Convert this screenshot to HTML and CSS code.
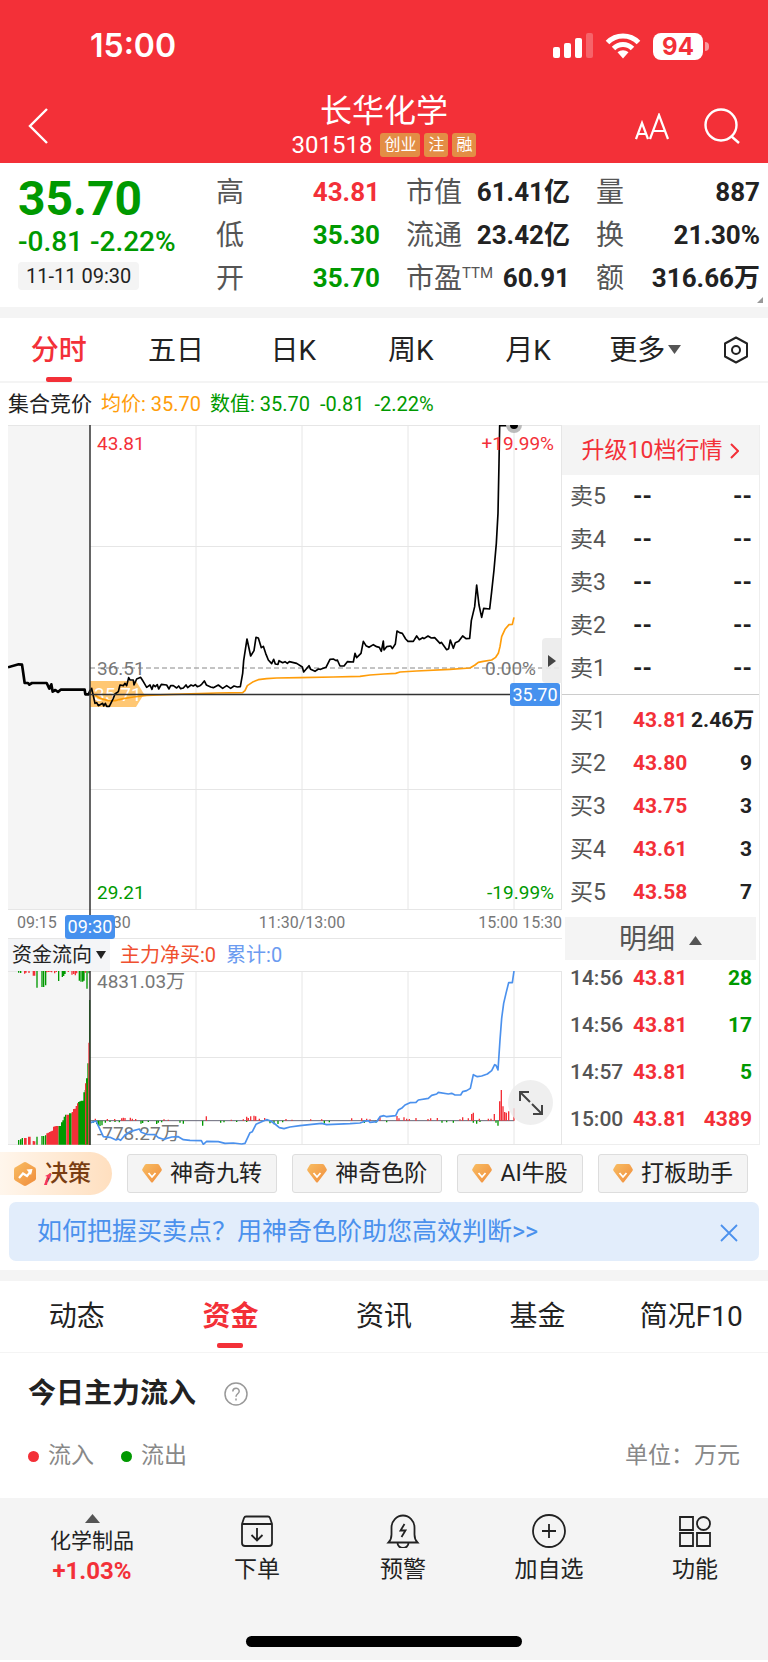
FILE: index.html
```html
<!DOCTYPE html>
<html lang="zh-CN">
<head>
  <meta charset="UTF-8" />
  <meta name="viewport" content="width=device-width, initial-scale=1.0"/>
  <title>长华化学 301518</title>
  <link rel="stylesheet" href="styles.css">
</head>
<body>

  <header class="header">
    <div class="status-bar">
      <span class="clock">15:00</span>
      <div class="status-icons">
        <svg width="40" height="26" viewBox="0 0 40 26" fill="#fff">
          <rect x="0" y="14" width="7" height="11" rx="2"/>
          <rect x="11" y="10" width="7" height="15" rx="2"/>
          <rect x="22" y="5" width="7" height="20" rx="2"/>
          <rect x="33" y="0" width="7" height="25" rx="2" opacity=".25"/>
        </svg>
        <svg width="36" height="26" viewBox="0 0 36 26" fill="none" stroke="#fff" stroke-width="5">
          <path d="M2.500 9.500C11 .8 25 .8 33.500 9.500"/>
          <path d="M8.500 15.500C14 10.200 22 10.200 27.500 15.500"/>
          <path d="M18 25.500l-5.500-6.200c3.200-2.800 7.800-2.800 11 0z" fill="#fff" stroke="none"/>
        </svg>
        <span class="battery">94</span>
      </div>
    </div>
    <div class="title-bar">
      <button class="icon-btn back" aria-label="返回">
        <svg width="20" height="36" viewBox="0 0 20 36" fill="none" stroke="#fff" stroke-width="2.400"><path d="M19 1L2 18l17 17"/></svg>
      </button>
      <div class="title">
        <h1>长华化学</h1>
        <div class="code">301518 <span class="tag">创业</span><span class="tag">注</span><span class="tag">融</span></div>
      </div>
      <div class="title-actions">
        <button class="icon-btn" aria-label="字体大小">
          <svg width="35" height="27" viewBox="0 0 35 27" fill="none" stroke="#fff" stroke-width="2.200"><path d="M1 26L7 10l6 16M3 21h8M15 26l9-24 9 24M18 18h12"/></svg>
        </button>
        <button class="icon-btn" aria-label="搜索">
          <svg width="36" height="36" viewBox="0 0 36 36" fill="none" stroke="#fff" stroke-width="2.400"><circle cx="17" cy="17" r="15.500"/><path d="M27 28l8 7"/></svg>
        </button>
      </div>
    </div>
  </header>

  <section class="quote">
    <div class="price">
      <strong class="last">35.70</strong>
      <span class="change">-0.81 -2.22%</span>
      <time class="stamp">11-11 09:30</time>
    </div>
    <dl class="stats">
      <div><dt>高</dt><dd class="up">43.81</dd></div>
      <div><dt>低</dt><dd class="down">35.30</dd></div>
      <div><dt>开</dt><dd class="down">35.70</dd></div>
    </dl>
    <dl class="stats">
      <div><dt>市值</dt><dd>61.41亿</dd></div>
      <div><dt>流通</dt><dd>23.42亿</dd></div>
      <div><dt>市盈<sup>TTM</sup></dt><dd>60.91</dd></div>
    </dl>
    <dl class="stats">
      <div><dt>量</dt><dd>887</dd></div>
      <div><dt>换</dt><dd>21.30%</dd></div>
      <div><dt>额</dt><dd>316.66万</dd></div>
    </dl>
    <svg class="corner" width="6" height="6" viewBox="0 0 6 6" fill="#999"><path d="M6 0v6H0z"/></svg>
  </section>

  <nav class="period-tabs">
    <a href="#" class="active">分时</a>
    <a href="#">五日</a>
    <a href="#">日K</a>
    <a href="#">周K</a>
    <a href="#">月K</a>
    <a href="#">更多<svg class="caret" width="13" height="9" viewBox="0 0 13 9" fill="#555"><path d="M0 0h13L6.500 9z"/></svg></a>
    <button class="icon-btn" aria-label="设置">
      <svg width="26" height="28" viewBox="0 0 26 28" fill="none" stroke="#222" stroke-width="2" stroke-linejoin="round"><path d="M13 1.500l11 6v13l-11 6-11-6v-13z"/><circle cx="13" cy="14" r="4"/></svg>
    </button>
  </nav>

  <div class="legend">
    <span class="phase">集合竞价</span>
    <span class="avg">均价: 35.70</span>
    <span class="down">数值: 35.70 &nbsp;-0.81 &nbsp;-2.22%</span>
  </div>

  <main class="market">
    <div class="charts">
      <div class="chart-box">
        <!-- 分时 price chart -->
        <svg class="chart" viewBox="8 425 554 514">
          <rect x="8" y="425" width="82" height="484" fill="#f5f5f5"/>
          <path class="grid" d="M8 425.500H562M90 546.500H562M90 789.500H562M8 909.500H562M8 938.500H562M196 425V909M302 425V909M408 425V909M514 425V909M561.500 425V909"/>
          <path class="prev-close" d="M90 668H562"/>
          <path d="M90 681h46l8 13-8 13H90z" fill="#ffc773"/>
          <text x="94" y="701" class="label faded">35.71</text>
          <g transform="translate(0 420) scale(.33333)">
            <path class="line" stroke="#ff9d0a" d="M285 825L300 835 325 842 345 842 370 836 400 831 440 826 520 823 600 821 650 819 728 818 735 812 742 797 760 785 775 779 800 776 830 774 900 773 1000 771 1080 769 1110 765 1152 762 1187 760 1200 756 1250 753 1350 748 1410 744 1425 735 1435 727 1450 724 1475 720 1487 712 1495 700 1500 680 1505 650 1515 628 1527 614 1537 613 1542 592"/>
            <path class="line auction" d="M24 742L56 733 66 734 68 747 74 789 84 789 88 794 96 789 140 789 148 806 154 793 158 815 166 810 174 816 182 809 254 809 256 823 266 823 272 810"/>
            <path class="line" stroke="#000" d="M272 810L275 805 285 850 290 848 295 857 308 850 311 858 316 850 320 859 328 859 335 845 340 835 345 822 355 815 360 795 370 797 375 790 380 797 386 773 390 780 400 780 402 795 410 777 422 772 427 780 430 785 440 802 450 795 456 808 460 795 466 800 472 794 476 807 484 793 500 795 507 807 512 797 520 797 530 804 536 798 542 806 550 804 558 795 563 803 573 795 580 798 586 794 592 800 600 797 605 793 613 783 619 795 632 801 640 803 655 795 668 805 680 797 692 805 702 798 712 801 721 800 728 760 731 722 741 657 752 708 762 692 768 652 775 654 784 683 790 679 797 700 805 720 815 731 821 718 826 732 834 733 837 722 848 728 855 725 862 730 868 725 890 730 907 741 911 756 927 737 932 748 945 754 955 747 962 748 978 742 990 718 1000 717 1008 722 1012 720 1020 738 1032 738 1042 725 1060 726 1065 700 1070 713 1083 700 1090 664 1098 677 1107 682 1120 674 1130 680 1138 682 1144 694 1150 663 1152 690 1160 680 1172 678 1177 686 1186 672 1191 633 1199 638 1207 640 1217 657 1224 664 1240 664 1250 648 1258 659 1268 653 1272 656 1284 648 1294 654 1304 653 1320 670 1324 667 1340 689 1346 686 1351 660 1360 685 1366 668 1376 664 1388 648 1398 656 1409 655 1414 602 1424 560 1430 495 1437 555 1445 592 1451 565 1469 567 1475 515 1482 450 1489 370 1494 280 1497 130 1499 17 1542 17"/>
          </g>
          <path d="M506 425a8 8 0 0 0 16 0z" fill="#bbb"/>
          <path d="M510 425a4 4 0 0 0 8 0z"/>
          <text x="97" y="450" class="label up">43.81</text>
          <text x="97" y="675" class="label muted">36.51</text>
          <text x="97" y="899" class="label down">29.21</text>
          <text x="554" y="450" class="label up end">+19.99%</text>
          <text x="536" y="675" class="label muted end">0.00%</text>
          <text x="554" y="899" class="label down end">-19.99%</text>
          <text x="17" y="928" class="axis">09:15</text>
          <text x="91" y="928" class="axis">09:30</text>
          <text x="302" y="928" class="axis mid">11:30/13:00</text>
          <text x="518" y="928" class="axis end">15:00</text>
          <text x="562" y="928" class="axis end">15:30</text>
          <path d="M90 425V939M90 694.500H514" stroke="#333" stroke-width="1.500"/>
          <rect x="65" y="915" width="50" height="24" rx="3" fill="#4691ee"/>
          <text x="90" y="933" class="label badge">09:30</text>
          <rect x="510" y="683" width="50" height="23" rx="3" fill="#4691ee"/>
          <text x="535" y="701" class="label badge">35.70</text>
        </svg>
        <button class="expand-side" aria-label="展开"><svg width="8" height="12" viewBox="0 0 8 12" fill="#444"><path d="M0 0l8 6-8 6z"/></svg></button>
      </div>

      <div class="flow-legend">
        <button class="flow-select">资金流向<svg width="10" height="8" viewBox="0 0 10 8" fill="#222"><path d="M0 0h10L5 8z"/></svg></button>
        <span class="net">主力净买:0</span>
        <span class="total">累计:0</span>
      </div>

      <div class="chart-box">
        <!-- 资金流向 chart -->
        <svg class="chart" viewBox="8 971 554 174">
          <rect x="8" y="971" width="82" height="174" fill="#f5f5f5"/>
          <path class="grid" d="M8 971.500H562M90 1057.500H562M8 1144.500H562M196 971V1144M302 971V1144M408 971V1144M514 971V1144M561.500 971V1144"/>
          <text x="97" y="988" class="label muted">4831.03万</text>
          <text x="97" y="1140" class="label muted">-778.27万</text>
          <g transform="translate(0 940) scale(.33333)">
            <path d="M272 542H1542" stroke="#667" stroke-width="3"/>
            <path class="bar sell" d="M56 93V98M62 93V99M111 93V143M126 93V141M131 93V141M137 93V136M176 93V123M187 93V111M191 93V108M195 93V102M238 93V122M243 93V125M248 93V125M252 93V122M261 93V146M267 93V100"/>
            <path class="bar buy" d="M74 93V101M78 93V98M87 93V99M100 93V107M104 93V107M140 93V97M145 93V96M150 93V96M155 93V97M164 93V100M169 93V96M205 93V96M216 93V104M221 93V102M226 93V106M230 93V100M256 93V98"/>
            <path class="bar sell" d="M56 614V600M62 614V598M67 614V594M111 614V590M126 614V588M131 614V588M137 614V586M177 614V558M181 614V558M185 614V547M189 614V541M193 614V530M197 614V524M209 614V520M213 614V520M236 614V486M240 614V484M244 614V482M248 614V482M252 614V457M256 614V450M260 614V415M264 614V370M269 614V180"/>
            <path class="bar buy" d="M74 614V594M78 614V594M86 614V590M90 614V590M100 614V603M104 614V604M141 614V580M145 614V578M149 614V576M153 614V574M157 614V572M161 614V560M165 614V559M169 614V558M173 614V558M201 614V524M205 614V524M217 614V516M221 614V507M225 614V506M229 614V498M233 614V490M257 614V430M267 614V308"/>
            <path class="bar sell" d="M280 542V548M290 542V552M295 542V556M300 542V558M306 542V556M316 542V548M330 542V546M345 542V546M358 542V547M423 542V551M428 542V549M445 542V546M470 542V552M475 542V548M485 542V547M540 542V548M550 542V551M608 542V557M662 542V548M672 542V547M710 542V546M740 542V546M810 542V550M822 542V553M834 542V552M848 542V547M973 542V551M988 542V547M1093 542V549M1128 542V548M1160 542V547M1326 542V548M1340 542V547M1360 542V548M1420 542V548M1430 542V551M1440 542V546M1488 542V548M1494 542V557"/>
            <path class="bar buy" d="M286 542V536M322 542V537M344 542V537M365 542V535M370 542V533M375 542V534M391 542V533M397 542V536M407 542V537M492 542V538M505 542V539M619 542V529M694 542V539M730 542V538M740 542V530M745 542V534M752 542V529M762 542V527M767 542V529M778 542V536M794 542V534M858 542V537M876 542V539M932 542V538M965 542V538M1055 542V535M1085 542V535M1100 542V536M1110 542V538M1140 542V532M1191 542V528M1197 542V535M1212 542V532M1220 542V536M1228 542V537M1248 542V534M1284 542V537M1292 542V535M1312 542V534M1380 542V538M1388 542V532M1405 542V535M1415 542V522M1420 542V518M1438 542V536M1465 542V536M1473 542V536M1483 542V522M1499 542V484M1504 542V450M1509 542V499M1514 542V516M1519 542V518M1526 542V514M1542 542V505"/>
            <path class="line" stroke="#4b91ed" d="M272 548L288 543 296 560 310 590 330 592 348 600 355 597 362 601 375 585 390 575 418 567 424 577 440 583 465 584 475 593 490 598 515 591 535 590 550 599 570 601 604 602 610 613 620 604 655 605 675 610 700 609 725 612 735 610 750 578 757 575 768 553 790 543 800 539 812 543 825 552 838 563 852 566 870 561 900 557 935 553 965 550 980 554 1050 551 1080 549 1090 545 1105 542 1110 547 1130 545 1140 530 1152 527 1160 530 1187 527 1195 510 1207 503 1215 495 1230 488 1248 487 1255 480 1285 475 1295 466 1310 462 1315 457 1345 462 1355 460 1365 465 1382 465 1388 455 1400 452 1411 445 1420 404 1432 410 1445 408 1462 402 1475 392 1484 374 1488 376 1494 390 1500 300 1505 235 1511 190 1518 160 1526 128 1537 128 1542 93"/>
          </g>
          <path d="M90 971V1145" stroke="#333" stroke-width="1.500"/>
        </svg>
        <button class="fullscreen" aria-label="全屏">
          <svg width="24" height="24" viewBox="0 0 24 24" fill="none" stroke="#444" stroke-width="2"><path d="M11 11L1 1M1 10V1h9M13 13l10 10M14 23h9v-9"/></svg>
        </button>
      </div>
    </div>

    <aside class="book">
      <a href="#" class="upgrade">升级10档行情<svg width="9" height="16" viewBox="0 0 9 16" fill="none" stroke="#f33038" stroke-width="2"><path d="M1 1l7 7-7 7"/></svg></a>
      <table class="orders asks">
        <tr><th>卖5</th><td>--</td><td>--</td></tr>
        <tr><th>卖4</th><td>--</td><td>--</td></tr>
        <tr><th>卖3</th><td>--</td><td>--</td></tr>
        <tr><th>卖2</th><td>--</td><td>--</td></tr>
        <tr><th>卖1</th><td>--</td><td>--</td></tr>
      </table>
      <table class="orders bids">
        <tr><th>买1</th><td class="up">43.81</td><td>2.46万</td></tr>
        <tr><th>买2</th><td class="up">43.80</td><td>9</td></tr>
        <tr><th>买3</th><td class="up">43.75</td><td>3</td></tr>
        <tr><th>买4</th><td class="up">43.61</td><td>3</td></tr>
        <tr><th>买5</th><td class="up">43.58</td><td>7</td></tr>
      </table>
      <button class="detail-btn">明细<svg width="13" height="9" viewBox="0 0 13 9" fill="#555"><path d="M0 9h13L6.500 0z"/></svg></button>
      <div class="trades">
        <table class="orders">
          <tr><th>14:56</th><td class="up">43.81</td><td class="down">28</td></tr>
          <tr><th>14:56</th><td class="up">43.81</td><td class="down">17</td></tr>
          <tr><th>14:57</th><td class="up">43.81</td><td class="down">5</td></tr>
          <tr><th>15:00</th><td class="up">43.81</td><td class="up">4389</td></tr>
        </table>
      </div>
    </aside>
  </main>

  <svg class="defs" width="0" height="0">
    <defs>
      <linearGradient id="gold" x1="0" y1="0" x2="1" y2="1"><stop offset="0" stop-color="#f8bd62"/><stop offset="1" stop-color="#f08c3c"/></linearGradient>
      <symbol id="gem" viewBox="0 0 20 19"><path d="M4.500 0h11q1 0 1.600.8L19.600 5q.6 1-.2 2L11 18q-1 1.200-2 0L.6 7Q-.2 6 .4 5L2.900.8Q3.500 0 4.500 0z" fill="url(#gold)"/><path d="M6.500 9l3.500 4 3.500-4" fill="none" stroke="#fff" stroke-width="1.800"/></symbol>
    </defs>
  </svg>

  <div class="tools">
    <button class="decision">
      <svg width="22" height="24" viewBox="0 0 22 24"><path d="M9.500.5q1.500-.8 3 0l8 4.700q1.500.9 1.500 2.500v8.600q0 1.600-1.500 2.500l-8 4.700q-1.500.8-3 0l-8-4.700Q0 17.900 0 16.300V7.700q0-1.600 1.500-2.500z" fill="url(#gold)"/><path d="M5 16l4-4.500 4 2.500 4-5" fill="none" stroke="#fff" stroke-width="2.200"/><path d="M12.500 7.500l6-.5-1.500 6z" fill="#fff"/></svg>
      <span>决策</span>
      <svg class="spark" width="8" height="12" viewBox="0 0 8 12" fill="#f5365c"><path d="M0 12L3 3.500 1 3l6-3-1 6-1.500-1.500L3 12z"/></svg>
    </button>
    <button class="chip"><svg width="20" height="19"><use href="#gem"/></svg>神奇九转</button>
    <button class="chip"><svg width="20" height="19"><use href="#gem"/></svg>神奇色阶</button>
    <button class="chip"><svg width="20" height="19"><use href="#gem"/></svg>AI牛股</button>
    <button class="chip"><svg width="20" height="19"><use href="#gem"/></svg>打板助手</button>
  </div>

  <div class="banner">
    <a href="#">如何把握买卖点？用神奇色阶助您高效判断&gt;&gt;</a>
    <button class="icon-btn" aria-label="关闭">
      <svg width="18" height="18" viewBox="0 0 18 18" stroke="#4b91ed" stroke-width="1.800"><path d="M1 1l16 16M17 1L1 17"/></svg>
    </button>
  </div>

  <nav class="info-tabs">
    <a href="#">动态</a>
    <a href="#" class="active">资金</a>
    <a href="#">资讯</a>
    <a href="#">基金</a>
    <a href="#">简况F10</a>
  </nav>

  <section class="inflow">
    <h2>今日主力流入
      <svg width="24" height="24" viewBox="0 0 24 24" fill="none" stroke="#999" stroke-width="1.500"><circle cx="12" cy="12" r="11"/><path d="M8.800 9.500c0-4.300 6.400-4.300 6.400-.2 0 2.400-3.200 2.600-3.200 5.400M12 16.500v2"/></svg>
    </h2>
    <div class="inflow-legend">
      <span class="dot in"></span><span>流入</span>
      <span class="dot out"></span><span>流出</span>
      <span class="unit">单位：万元</span>
    </div>
  </section>

  <footer class="bottom-bar">
    <a href="#" class="sector">
      <svg width="15" height="9" viewBox="0 0 15 9" fill="#555"><path d="M0 9h15L7.500 0z"/></svg>
      <span>化学制品</span>
      <strong>+1.03%</strong>
    </a>
    <a href="#">
      <svg width="34" height="34" viewBox="0 0 34 34"><path d="M2 10l2-6q.6-1.500 2-1.500h22q1.400 0 2 1.500l2 6v19q0 3-3 3H5q-3 0-3-3zM2 10h30M17 14v12M11.500 21l5.500 5.500 5.500-5.500"/></svg>
      下单
    </a>
    <a href="#">
      <svg width="34" height="34" viewBox="0 0 34 34"><path d="M2.500 28.500h29q-3-3-3-8v-7a11.500 12 0 0 0-23 0v7q0 5-3 8zM11.500 29a5.500 5 0 0 0 11 0M18.500 10l-4 6.500h5l-4 6.500"/></svg>
      预警
    </a>
    <a href="#">
      <svg width="34" height="34" viewBox="0 0 34 34"><circle cx="17" cy="17" r="16"/><path d="M17 10v14M10 17h14"/></svg>
      加自选
    </a>
    <a href="#">
      <svg width="34" height="34" viewBox="0 0 34 34"><path d="M2 3h13v13H2zM2 19h13v13H2zM19 19h13v13H19z"/><circle cx="25.500" cy="9.500" r="6.500"/></svg>
      功能
    </a>
  </footer>
  <div class="home-area"><div class="home-indicator"></div></div>

</body>
</html>
```

FILE: styles.css
```css
:root {
  --red: #f33038;
  --green: #009900;
  --gray: #f4f4f4;
  --font: Roboto, "Noto Sans CJK SC", sans-serif;
}

* {
  box-sizing: border-box;
}

body {
  margin: 0;
  background-color: #fff;
  color: #222;
  font-family: var(--font);
  line-height: 1.3;
}

a {
  color: inherit;
  text-decoration: none;
}

button {
  font-family: inherit;
  line-height: inherit;
  color: inherit;
  border: none;
  padding: 0;
  background: none;
  cursor: pointer;
}

svg {
  display: block;
}

.up {
  color: var(--red);
  fill: var(--red);
}

.down {
  color: var(--green);
  fill: var(--green);
}

/* header */
.header {
  background-color: var(--red);
  color: #fff;
  height: 163px;
}

.status-bar {
  display: flex;
  justify-content: space-between;
  align-items: center;
  height: 92px;
  padding: 0 65px 0 90px;
}

.clock {
  font-family: Inter, sans-serif;
  font-size: 32px;
  font-weight: 600;
}

.status-icons {
  display: flex;
  align-items: center;
  gap: 12px;
}

.battery {
  position: relative;
  width: 50px;
  height: 27px;
  border-radius: 8px;
  background-color: #fff;
  color: var(--red);
  font-family: Inter, sans-serif;
  font-size: 24px;
  font-weight: 700;
  line-height: 27px;
  text-align: center;
}

.battery::after {
  content: "";
  position: absolute;
  top: 9px;
  right: -6px;
  width: 4px;
  height: 9px;
  border-radius: 0 4px 4px 0;
  background-color: rgba(255, 255, 255, 0.5);
}

.title-bar {
  display: grid;
  grid-template-columns: 120px 1fr 120px;
  align-items: center;
  padding: 0 28px;
}

.title {
  text-align: center;
}

.title h1 {
  margin: 0;
  font-size: 32px;
  font-weight: 400;
  line-height: 38px;
}

.code {
  display: flex;
  justify-content: center;
  align-items: center;
  gap: 4px;
  font-size: 24px;
  line-height: 30px;
}

.tag {
  padding: 0 4px;
  border-radius: 3px;
  background-color: #e38d45;
  font-size: 16px;
  line-height: 24px;
}

.code .tag:first-child {
  margin-left: 4px;
}

.title-actions {
  display: flex;
  justify-content: flex-end;
  align-items: center;
  gap: 34px;
}

/* quote */
.quote {
  position: relative;
  display: grid;
  grid-template-columns: minmax(172px, 1fr) repeat(3, 164px);
  column-gap: 26px;
  padding: 8px 8px 7px 18px;
  border-bottom: 11px solid var(--gray);
}

.corner {
  position: absolute;
  right: 5px;
  bottom: 4px;
}

.price {
  display: flex;
  flex-direction: column;
  align-items: flex-start;
  color: var(--green);
  white-space: nowrap;
}

.last {
  font-size: 48px;
  line-height: 56px;
}

.change {
  font-size: 28px;
  font-weight: 500;
  line-height: 30px;
}

.stamp {
  margin-top: 5px;
  padding: 0 8px;
  border-radius: 4px;
  background-color: var(--gray);
  color: #222;
  font-size: 20px;
  line-height: 28px;
}

.stats {
  margin: 0;
  line-height: 43px;
  white-space: nowrap;
}

.stats div {
  display: flex;
  justify-content: space-between;
  height: 43px;
}

.stats dt {
  color: #555;
  font-size: 28px;
}

.stats dd {
  margin: 0;
  font-size: 26px;
  font-weight: 700;
}

.stats sup {
  font-size: 15px;
  line-height: 0;
}

/* tabs */
.period-tabs {
  display: grid;
  grid-template-columns: repeat(6, 1fr) 64px;
  align-items: center;
  height: 65px;
  border-bottom: 2px solid var(--gray);
  font-size: 28px;
  text-align: center;
}

.period-tabs a,
.info-tabs a {
  position: relative;
  line-height: 40px;
}

.period-tabs a {
  padding-top: 3px;
}

.period-tabs .icon-btn {
  justify-self: center;
}

.active {
  color: var(--red);
  font-weight: 500;
}

.active::after {
  content: "";
  position: absolute;
  left: 50%;
  bottom: -11px;
  width: 26px;
  height: 5px;
  margin-left: -13px;
  border-radius: 2px;
  background-color: var(--red);
}

.caret {
  display: inline-block;
  margin-left: 3px;
  vertical-align: 6px;
}

.legend {
  display: flex;
  gap: 9px;
  padding: 0 8px;
  font-size: 20px;
  line-height: 42px;
}

.phase {
  font-size: 21px;
}

.avg {
  color: #ff9d0a;
}

/* charts and order book */
.market {
  display: grid;
  grid-template-columns: 1fr 198px;
  margin: 0 8px 7px;
}

.chart-box {
  position: relative;
}

.chart {
  width: 100%;
  height: auto;
}

.grid {
  fill: none;
  stroke: #e6e6e6;
}

.prev-close {
  stroke: #888;
  stroke-dasharray: 5 3;
}

.line {
  fill: none;
  stroke-width: 5;
  stroke-linejoin: round;
}

.auction {
  stroke: #000;
  stroke-width: 8;
}

.bar {
  fill: none;
  stroke-width: 4;
}

.buy {
  stroke: var(--red);
}

.sell {
  stroke: var(--green);
}

.label {
  font-size: 19px;
}

.axis {
  font-size: 16px;
  fill: #777;
}

.muted {
  fill: #777;
}

.faded {
  fill: #fff;
}

.badge {
  fill: #fff;
  font-size: 18px;
  text-anchor: middle;
}

.mid {
  text-anchor: middle;
}

.end {
  text-anchor: end;
}

.expand-side {
  position: absolute;
  right: 0;
  top: 213px;
  display: flex;
  justify-content: center;
  align-items: center;
  width: 20px;
  height: 45px;
  border-radius: 4px 0 0 4px;
  background-color: rgba(235, 235, 235, 0.9);
}

.fullscreen {
  position: absolute;
  right: 9px;
  bottom: 20px;
  display: flex;
  justify-content: center;
  align-items: center;
  width: 45px;
  height: 45px;
  border-radius: 50%;
  background-color: rgba(235, 235, 235, 0.8);
}

.flow-legend {
  display: flex;
  align-items: center;
  gap: 10px;
  height: 32px;
  font-size: 20px;
}

.flow-select {
  display: flex;
  align-items: center;
  gap: 4px;
  height: 32px;
  padding: 0 4px;
  background-color: #f4f5f7;
  color: #222;
  font-size: 20px;
}

.net {
  color: #f0502f;
}

.total {
  color: #6b9bf0;
}

.book {
  display: flex;
  flex-direction: column;
  border: 1px solid #eee;
  border-width: 0 1px 1px 0;
}

.upgrade {
  display: flex;
  justify-content: center;
  align-items: center;
  gap: 8px;
  height: 50px;
  padding-top: 2px;
  background-color: var(--gray);
  color: var(--red);
  font-size: 23px;
}

.orders {
  width: 100%;
  border-spacing: 0;
  table-layout: fixed;
  font-size: 21px;
  white-space: nowrap;
}

.orders th,
.orders td {
  height: 43px;
  padding: 0;
  font-weight: 700;
  line-height: 43px;
  text-align: left;
}

.orders th {
  width: 71px;
  padding-left: 8px;
  color: #555;
  font-size: 23px;
  font-weight: 400;
}

.orders td:nth-child(2) {
  width: 58px;
}

.orders td:last-child {
  padding-right: 7px;
  text-align: right;
}

.asks td {
  font-size: 24px;
}

.bids {
  margin-top: 4px;
  padding-top: 4px;
  border-top: 1px solid #ccc;
}

.detail-btn {
  display: flex;
  justify-content: center;
  align-items: center;
  gap: 14px;
  height: 43px;
  margin: 3px 3px 0;
  padding-top: 3px;
  background-color: var(--gray);
  color: #555;
  font-size: 28px;
}

.trades {
  display: flex;
  align-items: flex-end;
  height: 183px;
  overflow: hidden;
}

.trades th,
.trades td {
  height: 47px;
  line-height: 47px;
}

.trades th {
  font-size: 21px;
  font-weight: 500;
}

/* tool chips */
.defs {
  position: absolute;
}

.tools {
  display: flex;
  align-items: center;
  gap: 15px;
  padding-right: 20px;
}

.decision {
  position: relative;
  display: flex;
  align-items: center;
  gap: 9px;
  width: 112px;
  height: 43px;
  padding-left: 14px;
  border-radius: 0 22px 22px 0;
  background: linear-gradient(90deg, #fff6ec, #ffdfbf);
  color: #7a3e12;
  font-size: 23px;
  font-weight: 500;
}

.spark {
  position: absolute;
  left: 44px;
  bottom: 10px;
}

.chip {
  flex: 1 1 auto;
  display: flex;
  justify-content: center;
  align-items: center;
  gap: 8px;
  height: 39px;
  border: 1px solid #ddd;
  border-radius: 3px;
  background-color: var(--gray);
  color: #222;
  font-size: 23px;
}

.banner {
  display: flex;
  justify-content: space-between;
  align-items: center;
  height: 59px;
  margin: 7px 9px 9px;
  padding: 2px 21px 0 28px;
  border-radius: 7px;
  background-color: #e2edfb;
  color: #4b91ed;
  font-size: 25px;
}

.info-tabs {
  display: grid;
  grid-template-columns: repeat(5, 1fr);
  align-items: center;
  height: 83px;
  border-top: 11px solid var(--gray);
  border-bottom: 1px solid var(--gray);
  font-size: 28px;
  text-align: center;
}

.info-tabs .active {
  font-weight: 700;
}

/* inflow */
.inflow {
  padding: 20px 28px 25px;
}

.inflow h2 {
  display: flex;
  align-items: center;
  gap: 28px;
  margin: 0;
  font-size: 28px;
  font-weight: 700;
  line-height: 42px;
}

.inflow-legend {
  display: flex;
  align-items: center;
  gap: 9px;
  margin-top: 24px;
  color: #888;
  font-size: 23px;
  line-height: 34px;
}

.dot {
  width: 11px;
  height: 11px;
  border-radius: 50%;
}

.in {
  background-color: var(--red);
}

.out {
  margin-left: 18px;
  background-color: var(--green);
}

.unit {
  margin-left: auto;
}

/* bottom bar */
.bottom-bar {
  display: grid;
  grid-template-columns: 184px repeat(4, 1fr);
  height: 120px;
  padding-top: 16px;
  background-color: var(--gray);
}

.bottom-bar a {
  display: flex;
  flex-direction: column;
  align-items: center;
  gap: 6px;
  font-size: 23px;
  line-height: 32px;
}

.bottom-bar svg {
  fill: none;
  stroke: #222;
  stroke-width: 1.8px;
}

.bottom-bar .sector {
  gap: 2px;
  font-size: 21px;
}

.bottom-bar .sector svg {
  fill: #555;
  stroke: none;
}

.sector strong {
  color: var(--red);
  font-size: 24px;
  line-height: 24px;
}

.home-area {
  display: flex;
  justify-content: center;
  padding: 18px 0 13px;
  background-color: var(--gray);
}

.home-indicator {
  width: 36%;
  height: 11px;
  border-radius: 6px;
  background-color: #000;
}
```
